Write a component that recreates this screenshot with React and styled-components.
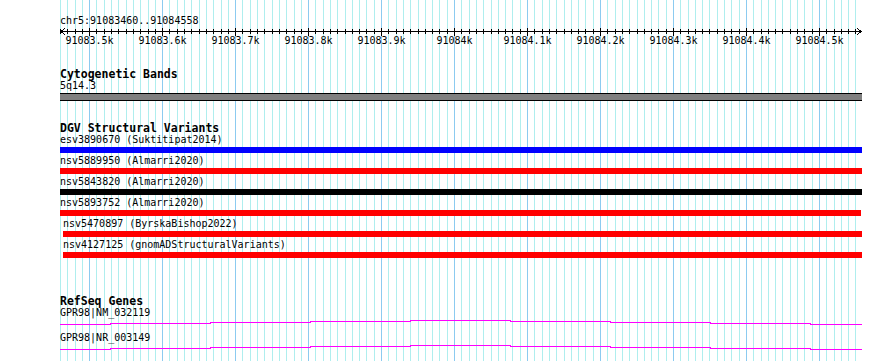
import React from 'react';
import styled, { createGlobalStyle } from 'styled-components';

const START = 91083460;
const END = 91084558;
const LEFT = 60;
const WIDTH = 802;
const BP = WIDTH / (END - START + 1);

const toX = (pos) => LEFT + (pos - START) * BP;

const gridLines = [];
for (let p = START; p <= END; p += 10) {
  gridLines.push({ x: Math.round(toX(p)) + 0.5, major: p % 100 === 0 });
}

const majorTicks = [];
for (let p = Math.ceil(START / 100) * 100; p <= END; p += 100) {
  majorTicks.push({ x: Math.round(toX(p)) + 0.5, label: `${(p / 1000).toFixed(p % 1000 === 0 ? 0 : 1)}k` });
}

const variants = [
  { name: 'esv3890670 (Suktitipat2014)', color: '#0000ff', offset: 0 },
  { name: 'nsv5889950 (Almarri2020)', color: '#ff0000', offset: 0 },
  { name: 'nsv5843820 (Almarri2020)', color: '#000000', offset: 0 },
  { name: 'nsv5893752 (Almarri2020)', color: '#ff0000', offset: 0, trim: 1 },
  { name: 'nsv5470897 (ByrskaBishop2022)', color: '#ff0000', offset: 3 },
  { name: 'nsv4127125 (gnomADStructuralVariants)', color: '#ff0000', offset: 3 },
];

const genes = ['GPR98|NM_032119', 'GPR98|NR_003149'];

// exon-ish steps of the transcript line, every 100px
const geneSteps = [5, 4, 3, 2, 1, 2, 3, 4, 5];

const GlobalStyle = createGlobalStyle`
  html, body {
    margin: 0;
    padding: 0;
    background: #ffffff;
  }
  body {
    font-family: "DejaVu Sans Mono", "Liberation Mono", monospace;
  }
`;

const Page = styled.div`
  position: relative;
  width: 890px;
  height: 361px;
  overflow: hidden;
  background: #ffffff;
`;

const Grid = styled.svg`
  position: absolute;
  top: 0;
  left: 0;
  z-index: 0;
`;

const Tracks = styled.div`
  position: relative;
  z-index: 1;
  display: flex;
  flex-direction: column;
  padding: 15px 0 0 ${LEFT}px;
`;

const Location = styled.div`
  font-size: 10px;
  line-height: 12px;
  height: 12px;
  color: #000;
`;

const Ruler = styled.svg`
  display: block;
  margin-left: -${LEFT}px;
  margin-bottom: 15px;
  font-family: "DejaVu Sans Mono", "Liberation Mono", monospace;
  font-size: 10px;
`;

const Track = styled.section`
  display: flex;
  flex-direction: column;
  margin-bottom: ${(p) => p.$after || 0}px;
`;

const TrackTitle = styled.h3`
  margin: 0;
  font-size: 11.5px;
  line-height: 12px;
  height: 12px;
  font-weight: 700;
  color: #000;
`;

const Feature = styled.div`
  display: flex;
  flex-direction: column;
  padding-left: ${(p) => p.$offset || 0}px;
  margin-bottom: ${(p) => p.$gap || 0}px;
`;

const FeatureLabel = styled.div`
  font-size: 10px;
  line-height: 12px;
  height: 12px;
  color: #000;
  white-space: nowrap;
`;

const Bar = styled.div`
  margin-top: 1px;
  height: ${(p) => p.$height || 6}px;
  width: ${(p) => WIDTH - (p.$offset || 0) - (p.$trim || 0)}px;
  background: ${(p) => p.$color};
  box-sizing: border-box;
`;

const BandBar = styled(Bar)`
  border-top: 1px solid #000;
  border-bottom: 1px solid #000;
`;

const GeneLine = styled.svg`
  display: block;
`;

function GridBackground() {
  return (
    <Grid width="890" height="361" shapeRendering="crispEdges">
      {gridLines.map((l, i) => (
        <line
          key={i}
          x1={l.x}
          x2={l.x}
          y1="0"
          y2="361"
          stroke={l.major ? '#8ccbf0' : '#afeeee'}
          strokeWidth="1"
        />
      ))}
    </Grid>
  );
}

function Axis() {
  const right = LEFT + WIDTH;
  return (
    <Ruler width="890" height="26" shapeRendering="crispEdges">
      <line x1={LEFT} x2={right} y1="4.5" y2="4.5" stroke="#000" />
      <polyline points={`${LEFT + 5},1.5 ${LEFT + 0.5},4.5 ${LEFT + 5},7.5`} fill="none" stroke="#000" />
      <polyline points={`${right - 5},1.5 ${right - 0.5},4.5 ${right - 5},7.5`} fill="none" stroke="#000" />
      {gridLines.map((l, i) => (
        <line
          key={i}
          x1={l.x}
          x2={l.x}
          y1={l.major ? 1 : 2}
          y2={l.major ? 9 : 7}
          stroke="#000"
        />
      ))}
      {majorTicks.map((t) => (
        <text key={t.label} x={t.x} y="16.5" textAnchor="middle" fill="#000">
          {t.label}
        </text>
      ))}
    </Ruler>
  );
}

function Transcript() {
  const pts = [];
  geneSteps.forEach((y, i) => {
    const x1 = i === 0 ? 0 : 50 + (i - 1) * 100;
    const x2 = Math.min(50 + i * 100, WIDTH);
    pts.push(`${x1},${y + 0.5}`, `${x2},${y + 0.5}`);
  });
  return (
    <GeneLine width={WIDTH} height="13" shapeRendering="crispEdges">
      <polyline points={pts.join(' ')} fill="none" stroke="#ff00ff" strokeWidth="1" />
    </GeneLine>
  );
}

export default function App() {
  return (
    <>
      <GlobalStyle />
      <Page>
        <GridBackground />
        <Tracks>
          <Location>chr5:91083460..91084558</Location>
          <Axis />

          <Track $after={21}>
            <TrackTitle>Cytogenetic Bands</TrackTitle>
            <Feature>
              <FeatureLabel>5q14.3</FeatureLabel>
              <BandBar $color="#808080" $height={8} />
            </Feature>
          </Track>

          <Track $after={37}>
            <TrackTitle>DGV Structural Variants</TrackTitle>
            {variants.map((v, i) => (
              <Feature key={v.name} $offset={v.offset} $gap={i < variants.length - 1 ? 2 : 0}>
                <FeatureLabel>{v.name}</FeatureLabel>
                <Bar $color={v.color} $offset={v.offset} $trim={v.trim} />
              </Feature>
            ))}
          </Track>

          <Track>
            <TrackTitle>RefSeq Genes</TrackTitle>
            {genes.map((g) => (
              <Feature key={g}>
                <FeatureLabel>{g}</FeatureLabel>
                <Transcript />
              </Feature>
            ))}
          </Track>
        </Tracks>
      </Page>
    </>
  );
}
